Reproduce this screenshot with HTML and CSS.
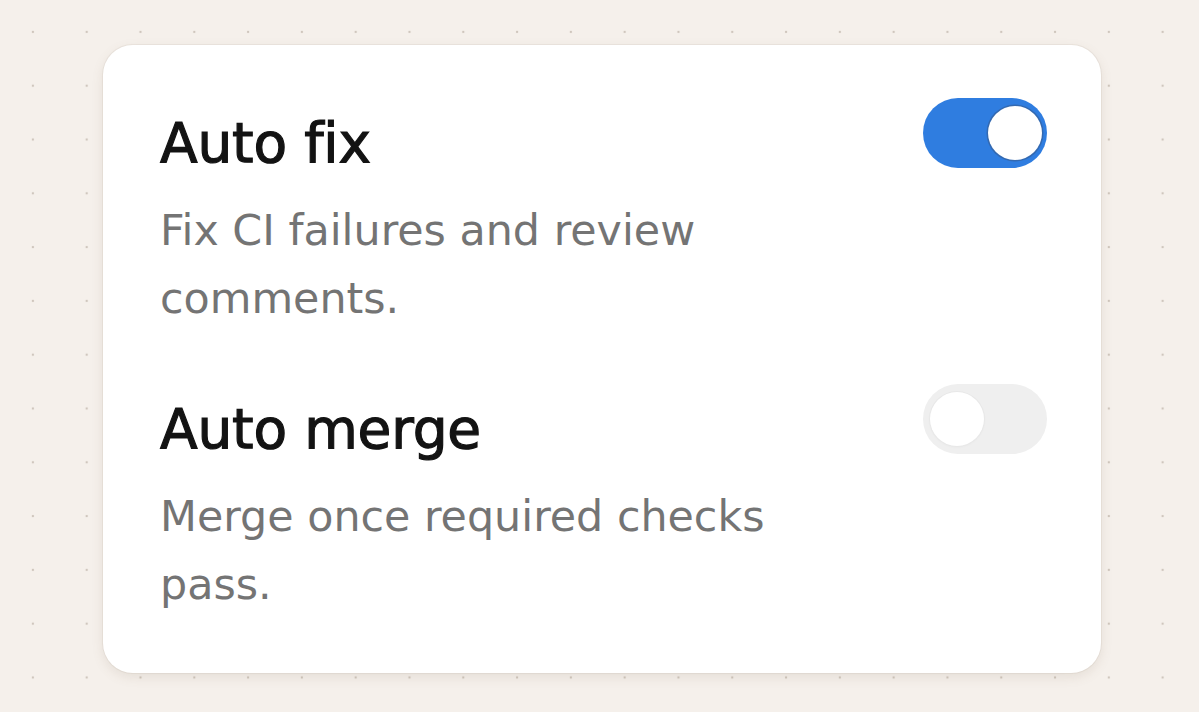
FILE: index.html
```html
<!DOCTYPE html>
<html lang="en">
<head>
<meta charset="utf-8">
<title>Settings</title>
<link rel="stylesheet" href="styles.css">
</head>
<body>
<main class="canvas">
  <section class="card">
    <div class="setting">
      <div class="setting-text">
        <h2 class="setting-title">Auto fix</h2>
        <p class="setting-desc">Fix CI failures and review comments.</p>
      </div>
      <button class="toggle toggle-on" type="button" aria-pressed="true"><span class="knob"></span></button>
    </div>
    <div class="setting">
      <div class="setting-text">
        <h2 class="setting-title">Auto merge</h2>
        <p class="setting-desc">Merge once required checks pass.</p>
      </div>
      <button class="toggle toggle-off" type="button" aria-pressed="false"><span class="knob"></span></button>
    </div>
  </section>
</main>
</body>
</html>
```
FILE: styles.css
```css
* { box-sizing: border-box; }
html, body { margin: 0; padding: 0; }
body {
  width: 1199px;
  height: 712px;
  overflow: hidden;
  background-color: #f5f0eb;
  background-image: radial-gradient(circle, #cfc6bd 0 1.1px, transparent 1.6px);
  background-size: 53.8px 53.8px;
  background-position: 6px 5px;
  font-family: "DejaVu Sans", Inter, sans-serif;
}
.canvas {
  padding: 45px 0 0 103px;
}
.card {
  width: 998px;
  height: 628px;
  background: #ffffff;
  border-radius: 30px;
  box-shadow: 0 4px 12px rgba(120, 100, 80, 0.13), 0 0 0 1px rgba(200, 190, 180, 0.2);
  padding: 53px 54px 0 57px;
  display: flex;
  flex-direction: column;
  gap: 52px;
}
.setting {
  display: flex;
  justify-content: space-between;
  align-items: flex-start;
}
.setting-text {
  padding-top: 15px;
  width: 660px;
}
.setting-title {
  margin: 0;
  font-size: 55px;
  line-height: 60px;
  font-weight: 400;
  -webkit-text-stroke: 1.2px #131313;
  color: #131313;
  letter-spacing: -0.2px;
}
.setting-desc {
  margin: 23px 0 0;
  font-size: 42.8px;
  line-height: 68px;
  font-weight: 400;
  color: #747474;
  letter-spacing: 0;
}
.toggle {
  position: relative;
  width: 124px;
  height: 70px;
  border-radius: 35px;
  border: none;
  padding: 0;
  flex: none;
  cursor: pointer;
}
.toggle-on { background: #2f7de0; }
.toggle-off { background: #efefef; }
.knob {
  position: absolute;
  top: 8px;
  width: 54px;
  height: 54px;
  border-radius: 50%;
  background: #ffffff;
}
.toggle-on .knob {
  right: 5px;
  box-shadow: 0 0 0 1.5px rgba(60, 70, 90, 0.35);
}
.toggle-off .knob {
  left: 7px;
  box-shadow: 0 0 0 1px #e8e8e8, 0 1px 3px rgba(0, 0, 0, 0.04);
}
```
